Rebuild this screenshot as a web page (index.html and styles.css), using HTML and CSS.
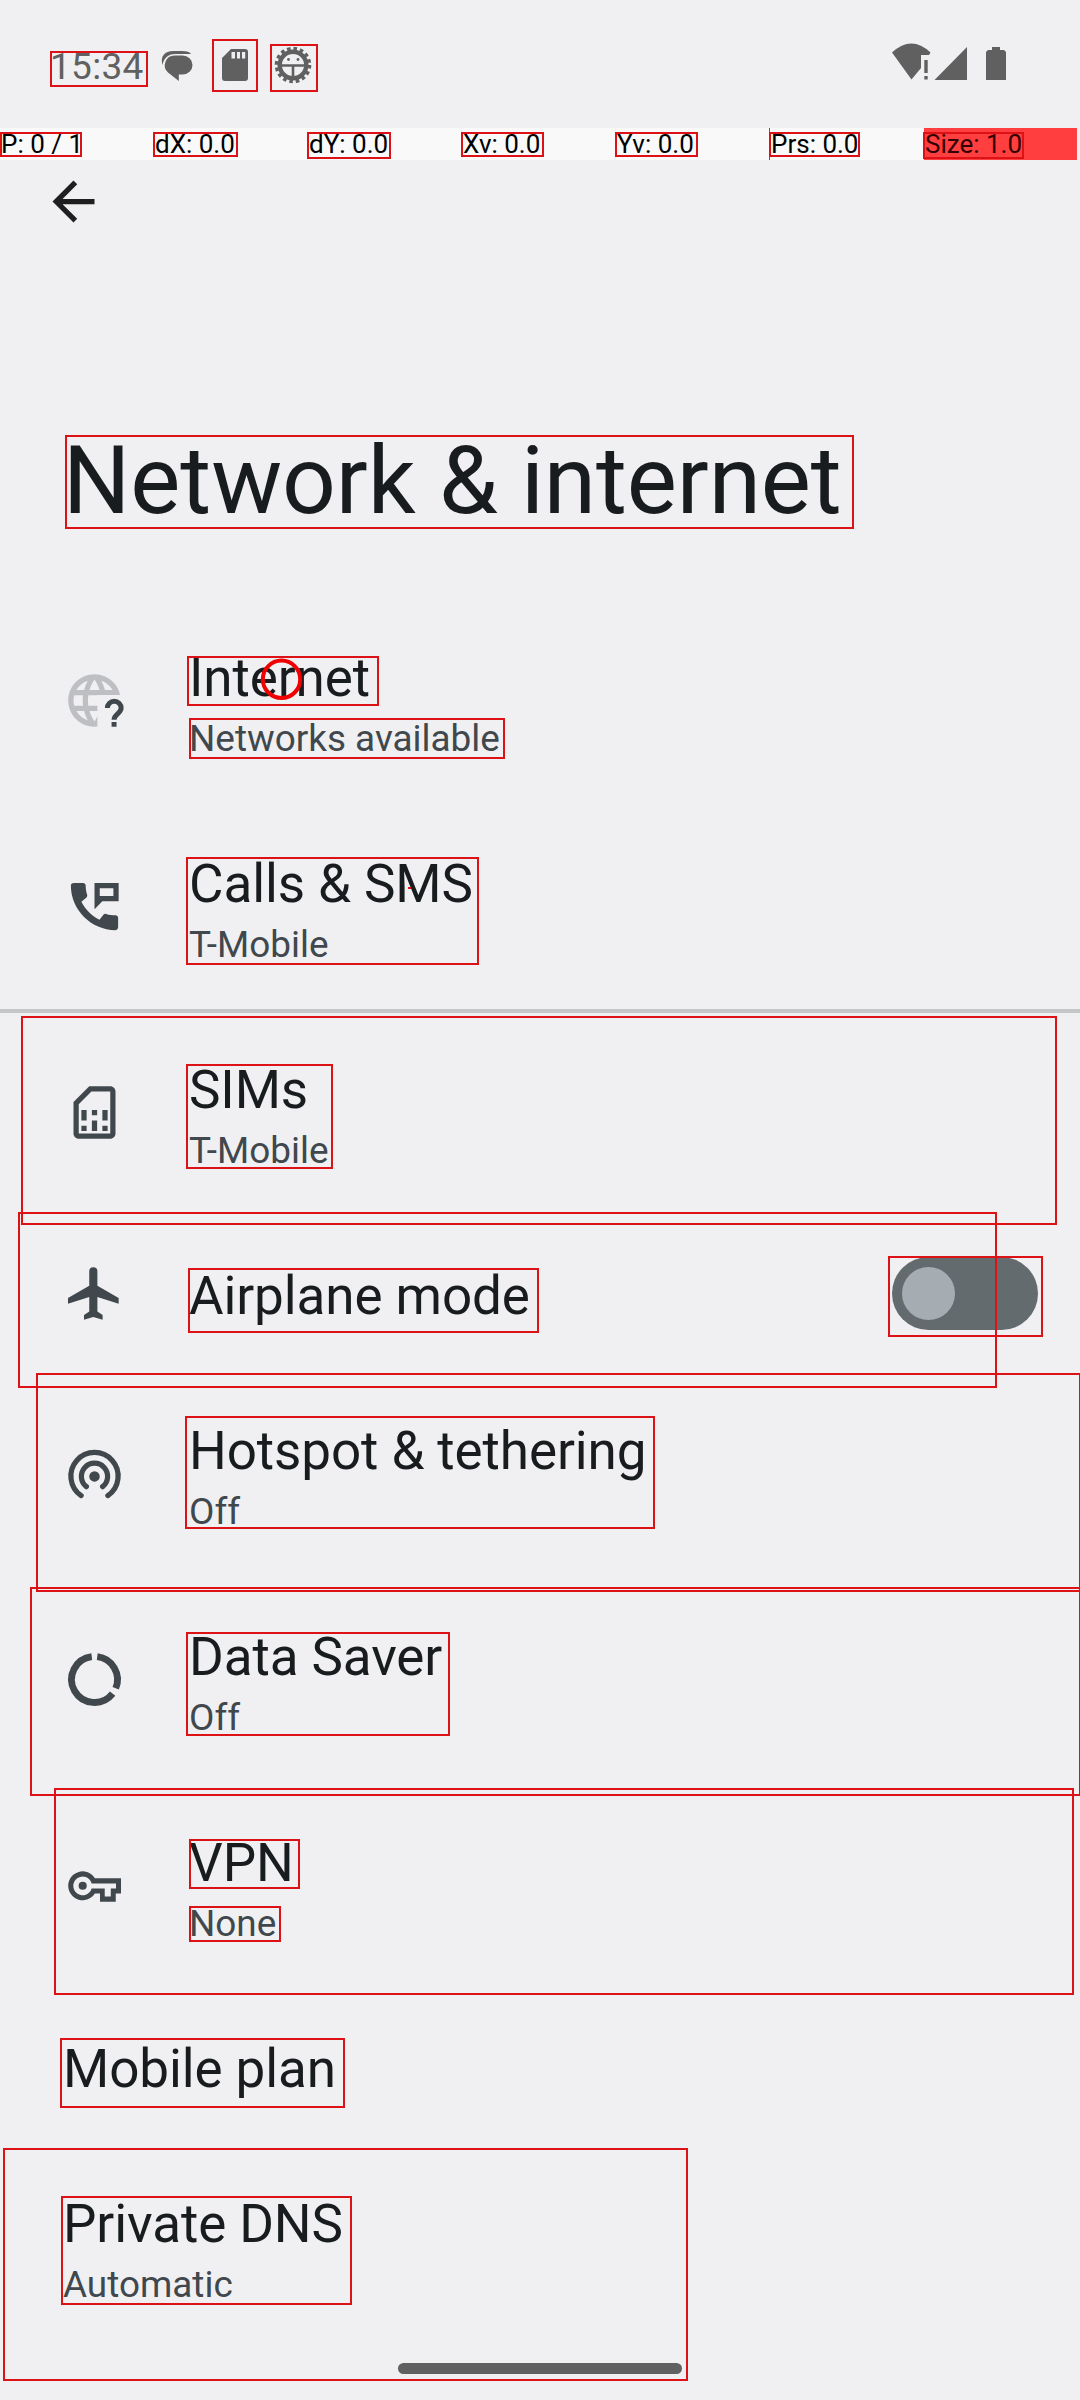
FILE: index.html
```html
<!DOCTYPE html>
<html lang="en">
<head>
<meta charset="utf-8">
<title>Network &amp; internet</title>
<link rel="stylesheet" href="styles.css">
</head>
<body>
<div class="screen">
  <header class="status">
    <span class="clock">15:34</span>
    <svg class="status-left" viewBox="0 0 158 44" width="158" height="44">
      <path d="M2.500 22C0 13 5 8 13 8h9c5 0 8 1 9 3H15C8 11 4 15 2.500 22z"/>
      <path d="M14.500 12.500H22.500a10 9.500 0 0 1 0 19H18.800V38L8 29.500A9.800 9.800 0 0 1 14.500 12.500z"/>
      <path fill-rule="evenodd" d="M71 6H85a3 3 0 0 1 3 3V35a3 3 0 0 1-3 3H65a3 3 0 0 1-3-3V15zM71.500 9V15.500H75V9zM77 9V15.500H80V9zM82 9V15.500H85.200V9z"/>
      <g class="gear">
        <circle cx="133" cy="22" r="13.300" stroke-width="4.400"/>
        <circle cx="133" cy="22" r="16.300" stroke-width="4" stroke-dasharray="3.500 2.900"/>
        <path stroke-width="2.600" d="M120 22.500H146M133 22.500V36"/>
      </g>
      <circle cx="128.500" cy="16.500" r="1.400"/><circle cx="138" cy="16.500" r="1.400"/>
    </svg>
    <svg class="status-right" viewBox="0 0 120 40" width="120" height="40">
      <path d="M0 12.500Q19.500-5.500 38.500 12.500L37 15H29V28L19.500 39.500z" />
      <path d="M32.300 20H35.700V33H32.300zM32.300 36H35.700V39.500H32.300z"/>
      <path d="M42.500 40L75 7V40z"/>
      <path d="M100 7H108V10H112L114 12V40H94V12L96 10H100z"/>
    </svg>
  </header>

  <div class="pointer-bar">
    <span>P: 0 / 1</span><span>dX: 0.0</span><span>dY: 0.0</span><span>Xv: 0.0</span><span>Yv: 0.0</span><span class="pressure">Prs: 0.0</span><span class="size">Size: 1.0</span>
  </div>

  <nav class="toolbar">
    <svg viewBox="0 0 24 24" width="63" height="63"><path d="M20 11H7.830l5.590-5.590L12 4l-8 8 8 8 1.410-1.410L7.830 13H20v-2z"/></svg>
  </nav>
  <h1>Network &amp; internet</h1>

  <main class="list">
    <section class="row">
      <svg class="icon" viewBox="0 0 24 24">
        <clipPath id="globe-cut"><path d="M0 0H24V9.900H13.100V24H0z"/></clipPath>
        <path class="faded" clip-path="url(#globe-cut)" d="M11.990 2C6.470 2 2 6.480 2 12s4.470 10 9.990 10C17.520 22 22 17.520 22 12S17.520 2 11.990 2zm6.930 6h-2.950c-.32-1.250-.78-2.450-1.380-3.560 1.840.63 3.370 1.910 4.330 3.560zM12 4.040c.83 1.200 1.480 2.530 1.910 3.960h-3.820c.43-1.430 1.080-2.760 1.910-3.960zM4.260 14C4.100 13.360 4 12.690 4 12s.1-1.360.26-2h3.380c-.08.66-.14 1.320-.14 2s.06 1.340.14 2H4.260zm.82 2h2.950c.32 1.250.78 2.450 1.380 3.560-1.840-.63-3.370-1.900-4.330-3.560zm2.950-8H5.080c.96-1.660 2.490-2.930 4.330-3.560C8.810 5.550 8.350 6.750 8.030 8zM12 19.960c-.83-1.200-1.480-2.530-1.910-3.960h3.820c-.43 1.430-1.080 2.760-1.910 3.960zM14.340 14H9.660c-.09-.66-.16-1.320-.16-2s.07-1.350.16-2h4.680c.09.65.16 1.320.16 2s-.07 1.340-.16 2z"/>
        <path class="line" stroke-width="1.900" d="M16.900 14.900a2.620 2.620 0 0 1 5.250 0c0 2-2.700 2.400-2.700 4.400"/>
        <path d="M18.500 20.200h1.900V22h-1.900z"/>
      </svg>
      <div><h2>Internet</h2><p>Networks available</p></div>
    </section>
    <section class="row divided">
      <svg class="icon" viewBox="0 0 24 24"><path d="M20.010 15.380c-1.230 0-2.420-.2-3.530-.56-.35-.12-.74-.03-1.010.24l-1.570 1.970c-2.830-1.350-5.480-3.900-6.890-6.830l1.950-1.660c.27-.28.35-.67.24-1.020-.37-1.110-.56-2.300-.56-3.530 0-.54-.45-.99-.99-.99H4.190C3.650 3 3 3.240 3 3.990 3 13.280 10.730 21 20.010 21c.71 0 .99-.63.99-1.180v-3.450c0-.54-.45-.99-.99-.99zM12 3v10l3-3h6.200V3zm7.200 5H14V5h5.200z"/></svg>
      <div><h2>Calls &amp; SMS</h2><p>T-Mobile</p></div>
    </section>
    <section class="row">
      <svg class="icon" viewBox="0 0 24 24"><path d="M18 2h-8L4 8v12c0 1.100.9 2 2 2h12c1.100 0 2-.9 2-2V4c0-1.100-.9-2-2-2zm0 18H6V8.830L10.830 4H18v16zM7 17h2v2H7zm8 0h2v2h-2zm-8-6h2v4H7zm4 4h2v4h-2zm0-4h2v2h-2zm4 0h2v4h-2z"/></svg>
      <div><h2>SIMs</h2><p>T-Mobile</p></div>
    </section>
    <section class="row single">
      <svg class="icon" viewBox="0 0 24 24"><path d="M21.200 16.300v-2.200L13.100 9.400V3.900a1.550 1.550 0 0 0-3.100 0v5.500L1.900 14.100v2.200L10 13.700v5.500L8 20.600v1.800l3.550-1.100 3.550 1.100v-1.800l-2-1.400v-5.500z"/></svg>
      <div><h2>Airplane mode</h2></div>
      <span class="switch"><span class="thumb"></span></span>
    </section>
    <section class="row">
      <svg class="icon" viewBox="0 0 24 24"><circle cx="12" cy="13.100" r="2"/><path class="line" stroke-linecap="round" stroke-width="2" d="M6.900 20.400A9 9 0 1 1 17.100 20.400M8.900 17A5 5 0 1 1 15.100 17"/></svg>
      <div><h2>Hotspot &amp; tethering</h2><p>Off</p></div>
    </section>
    <section class="row">
      <svg class="icon" viewBox="0 0 24 24"><path class="line" stroke-width="2.600" d="M13.050 3.310A8.750 8.750 0 0 1 20.080 15.350M18.900 17.390A8.750 8.750 0 1 1 10.950 3.310"/></svg>
      <div><h2>Data Saver</h2><p>Off</p></div>
    </section>
    <section class="row">
      <svg class="icon" viewBox="0 0 24 24"><path fill-rule="evenodd" d="M12.150 9.200H22.100V15H20.100V18.200H14.100V15H12.150A5.500 5.500 0 1 1 12.150 9.200zM10.900 11.200H20.200V13.100H18.200V16.200H15.900V13.100H10.900A3.550 3.550 0 1 1 10.900 11.200z"/><circle cx="7.500" cy="12.100" r="1.550"/></svg>
      <div><h2>VPN</h2><p>None</p></div>
    </section>
    <section class="row single plain"><div><h2>Mobile plan</h2></div></section>
    <section class="row plain"><div><h2>Private DNS</h2><p>Automatic</p></div></section>
  </main>
  <footer class="home"><span class="handle"></span></footer>

  <svg class="overlay" viewBox="0 0 1080 2400" width="1080" height="2400">
    <rect x="51" y="52" width="96" height="34"/>
    <rect x="213" y="40" width="44" height="51"/>
    <rect x="271" y="45" width="46" height="46"/>
    <rect x="1" y="133" width="80" height="23"/>
    <rect x="154" y="133" width="83" height="23"/>
    <rect x="308" y="133" width="82" height="25"/>
    <rect x="462" y="133" width="81" height="23"/>
    <rect x="616" y="133" width="81" height="23"/>
    <rect x="770" y="133" width="89" height="23"/>
    <rect x="924" y="133" width="99" height="25"/>
    <rect x="66" y="436" width="787" height="92"/>
    <rect x="188" y="657" width="190" height="48"/>
    <rect x="190" y="719" width="314" height="39"/>
    <rect x="187" y="858" width="291" height="106"/>
    <rect x="22" y="1017" width="1034" height="207"/>
    <rect x="187" y="1065" width="145" height="103"/>
    <rect x="19" y="1213" width="977" height="174"/>
    <rect x="189" y="1269" width="349" height="63"/>
    <rect x="889" y="1257" width="153" height="79"/>
    <rect x="37" y="1374" width="1043" height="217"/>
    <rect x="186" y="1417" width="468" height="111"/>
    <rect x="31" y="1588" width="1049" height="207"/>
    <rect x="187" y="1633" width="262" height="102"/>
    <rect x="55" y="1789" width="1018" height="205"/>
    <rect x="190" y="1840" width="109" height="48"/>
    <rect x="190" y="1907" width="90" height="34"/>
    <rect x="61" y="2039" width="283" height="68"/>
    <rect x="4" y="2149" width="683" height="231"/>
    <rect x="62" y="2197" width="289" height="107"/>
    <circle class="touch" cx="281.500" cy="679.300" r="18.700"/>
    <path d="M408 888H411"/>
  </svg>
</div>
</body>
</html>
```
FILE: styles.css
```css
* { box-sizing: border-box; }
body { margin: 0; background: #f0f0f2; font-family: Roboto, sans-serif; }
h1, h2, p { margin: 0; font-weight: 400; }
svg { display: block; flex: none; }

.screen {
  position: relative;
  display: flex;
  flex-direction: column;
  width: 1080px;
  height: 2400px;
  overflow: hidden;
  color: #191c1e;
}

.status {
  display: flex;
  align-items: flex-start;
  height: 128px;
  padding: 40px 68px 0 50px;
  color: #606060;
  fill: #606060;
}
.clock {
  width: 110px;
  padding-top: 5px;
  font-size: 37px;
  line-height: 43px;
  letter-spacing: 0.3px;
}
.status-left { margin-top: 3px; }
.status-right { margin-left: auto; }
.gear { fill: none; stroke: #606060; }

.pointer-bar {
  display: flex;
  gap: 1px;
  height: 32px;
  color: #000;
  font-size: 26px;
  line-height: 32px;
}
.pointer-bar span {
  width: 153px;
  padding-left: 1px;
  background: #f9f9f9;
  white-space: nowrap;
}
.pointer-bar .pressure { box-shadow: -1px 0 #c83030; }
.pointer-bar .size { background: #ff3f3f; color: #300; }

.toolbar {
  height: 250px;
  padding: 10px 42px;
  fill: #1f1f1f;
}
h1 {
  height: 187px;
  padding: 16px 63px 0;
  font-size: 94.5px;
  line-height: 110px;
  letter-spacing: -0.1px;
  white-space: nowrap;
}

.row {
  display: flex;
  align-items: flex-start;
  height: 206px;
  padding: 50px 42px 0 63px;
}
.row.single { height: 155px; }
.row.divided + .row { box-shadow: inset 0 4px #c5c6c8, inset 0 1px #f0f0f2; }
.icon {
  width: 63px;
  height: 63px;
  margin: 22px 63px 0 0;
  fill: #41484d;
}
.single .icon { margin-top: -4px; }
.line { fill: none; stroke: #41484d; }
.faded { fill: #bdbfc2; }
h2 {
  font-size: 53px;
  line-height: 62px;
  letter-spacing: -0.1px;
  white-space: nowrap;
}
p {
  margin-top: 8px;
  color: #41484d;
  font-size: 36.9px;
  line-height: 43px;
}

.switch {
  width: 146px;
  height: 73px;
  margin: -8px 0 0 auto;
  padding: 10px;
  border-radius: 37px;
  background: #646b6e;
}
.thumb {
  display: block;
  width: 53px;
  height: 53px;
  border-radius: 50%;
  background: #a5acb2;
}

.home { display: flex; height: 51px; padding: 14px 0 0 398px; }
.handle { width: 284px; height: 11px; border-radius: 6px; background: #606060; }

.overlay {
  position: absolute;
  top: 0;
  left: 0;
  fill: none;
  stroke: #dc1216;
  stroke-width: 2;
  pointer-events: none;
}
.touch { stroke: #f00000; stroke-width: 4; }
```
